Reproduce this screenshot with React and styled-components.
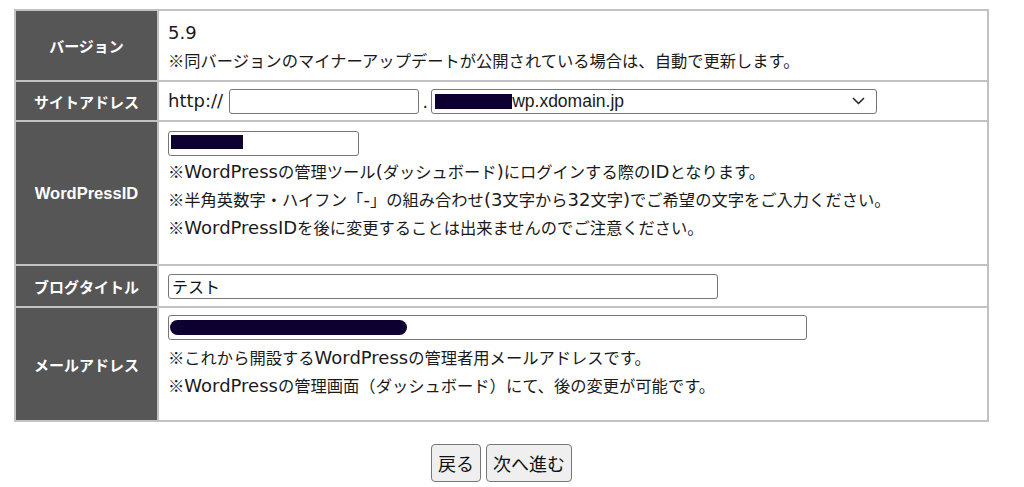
import styled, { createGlobalStyle } from 'styled-components';

const Global = createGlobalStyle`
    body {
        margin: 0;
        background: #fff;
        font-family: "Noto Sans CJK JP", sans-serif;
        color: #1a1a1a;
    }
`

const Page = styled.div`
    width: 975px;
    padding: 9px 0 0 14px;
`

const Table = styled.table`
    width: 975px;
    border-collapse: collapse;
    table-layout: fixed;
`

const Label = styled.th`
    width: 141px;
    background: #565656;
    color: #fff;
    font-family: ${({ $latin }) => ($latin ? '"Liberation Sans", ' : '')}"Noto Sans CJK JP", sans-serif;
    font-size: ${({ $latin }) => ($latin ? '16.5px' : '15px')};
    font-weight: 700;
    border: 2px solid #c2c2c2;
    text-align: center;
    vertical-align: middle;
    padding: 0;
`

const Cell = styled.td`
    border: 2px solid #c2c2c2;
    padding: ${({ $pad }) => $pad || '0 9px'};
    font-size: 16.3px;
    line-height: 28px;
    height: ${({ $h }) => $h}px;
    box-sizing: border-box;
    vertical-align: ${({ $top }) => ($top ? 'top' : 'middle')};
`

const Line = styled.div`
    white-space: nowrap;
    height: 28px;
`

const Lat = styled.span`
    font-family: "DejaVu Sans", sans-serif;
    font-size: 18px;
    line-height: 28px;
`

const Scheme = styled(Lat)`
    padding-right: 6px;
`

const Inline = styled.div`
    display: flex;
    align-items: center;
`

const Dot = styled.span`
    width: 12px;
    text-align: center;
`

const FieldWrap = styled.div`
    position: relative;
    display: block;
    width: fit-content;
    margin: ${({ $m }) => $m || '0'};
`

const Input = styled.input`
    display: block;
    box-sizing: border-box;
    width: ${({ $w }) => $w}px;
    height: 25px;
    border: 1px solid #767676;
    border-radius: 3px;
    padding: 0 3px;
    font-size: 16px;
    font-family: "Noto Sans CJK JP", sans-serif;
    color: #111;
    background: #fff;
    outline: none;
`

const Select = styled.div`
    box-sizing: border-box;
    width: 446px;
    height: 25px;
    border: 1px solid #767676;
    border-radius: 3px;
    display: flex;
    align-items: center;
    padding: 0 11px 0 3px;
    font-family: "Liberation Sans", sans-serif;
    font-size: 17.5px;
    background: #fff;
`

const Redact = styled.span`
    position: absolute;
    left: ${({ $l }) => $l}px;
    top: ${({ $t }) => $t}px;
    width: ${({ $w }) => $w}px;
    height: ${({ $h }) => $h}px;
    background: #0d0030;
    border-radius: ${({ $r }) => $r || 0}px;
`

const Block = styled.span`
    display: inline-block;
    width: ${({ $w }) => $w}px;
    height: 15px;
    background: #0d0030;
`

const Grow = styled.span`
    flex: 1;
`

const Buttons = styled.div`
    display: flex;
    justify-content: center;
    gap: 5px;
    margin-top: 22px;
`

const Button = styled.button`
    height: 38px;
    padding: 0 6px;
    font-size: 18px;
    font-family: "Noto Sans CJK JP", sans-serif;
    color: #111;
    background: #efefef;
    border: 1px solid #767676;
    border-radius: 4px;
    line-height: 1;
`

// ascii runs get the wider latin face, like the original page font
const Txt = ({ children }) =>
    children.split(/([\x20-\x7E]+)/).map((part, i) =>
        /^[\x20-\x7E]+$/.test(part) ? <Lat key={i}>{part}</Lat> : part
    )

const Chevron = () => (
    <svg width="13" height="8" viewBox="0 0 13 8" fill="none">
        <path d="M1 1 L6.5 6.5 L12 1" stroke="#222" strokeWidth="1.5" />
    </svg>
)

export default function App() {
    return (
        <Page>
            <Global />
            <Table>
                <tbody>
                    <tr>
                        <Label>バージョン</Label>
                        <Cell $h={71} $pad="6px 9px">
                            <Line><Txt>5.9</Txt></Line>
                            <Line>※同バージョンのマイナーアップデートが公開されている場合は、自動で更新します。</Line>
                        </Cell>
                    </tr>
                    <tr>
                        <Label>サイトアドレス</Label>
                        <Cell $h={40}>
                            <Inline>
                                <Scheme>http://</Scheme>
                                <Input $w={190} />
                                <Dot>.</Dot>
                                <Select>
                                    <Block $w={77} />
                                    <span>wp.xdomain.jp</span>
                                    <Grow />
                                    <Chevron />
                                </Select>
                            </Inline>
                        </Cell>
                    </tr>
                    <tr>
                        <Label $latin>WordPressID</Label>
                        <Cell $h={144} $top $pad="9px 9px 0">
                            <FieldWrap $m="0 0 1px">
                                <Input $w={191} />
                                <Redact $l={3} $t={4} $w={72} $h={14} />
                            </FieldWrap>
                            <Line><Txt>※WordPressの管理ツール(ダッシュボード)にログインする際のIDとなります。</Txt></Line>
                            <Line><Txt>※半角英数字・ハイフン「-」の組み合わせ(3文字から32文字)でご希望の文字をご入力ください。</Txt></Line>
                            <Line><Txt>※WordPressIDを後に変更することは出来ませんのでご注意ください。</Txt></Line>
                        </Cell>
                    </tr>
                    <tr>
                        <Label>ブログタイトル</Label>
                        <Cell $h={42}>
                            <Input $w={550} defaultValue="テスト" />
                        </Cell>
                    </tr>
                    <tr>
                        <Label>メールアドレス</Label>
                        <Cell $h={114} $top $pad="7px 9px 0">
                            <FieldWrap $m="0 0 3px">
                                <Input $w={639} />
                                <Redact $l={2} $t={5} $w={237} $h={15} $r={8} />
                            </FieldWrap>
                            <Line><Txt>※これから開設するWordPressの管理者用メールアドレスです。</Txt></Line>
                            <Line><Txt>※WordPressの管理画面（ダッシュボード）にて、後の変更が可能です。</Txt></Line>
                        </Cell>
                    </tr>
                </tbody>
            </Table>
            <Buttons>
                <Button>戻る</Button>
                <Button>次へ進む</Button>
            </Buttons>
        </Page>
    )
}
